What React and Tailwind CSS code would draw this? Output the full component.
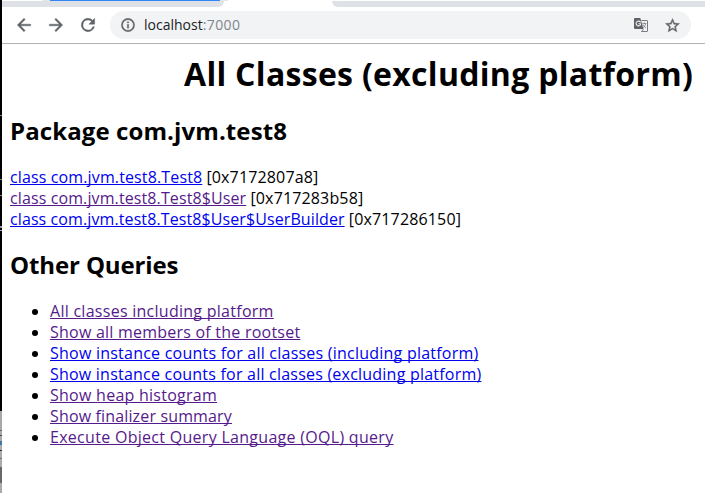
const classes = [
  { name: 'class com.jvm.test8.Test8', address: '[0x7172807a8]', style: 'text-[#0000ee] tracking-[0.13px]' },
  { name: 'class com.jvm.test8.Test8$User', address: '[0x717283b58]', style: 'text-[#551a8b] tracking-[0.11px]' },
  { name: 'class com.jvm.test8.Test8$User$UserBuilder', address: '[0x717286150]', style: 'text-[#0000ee] tracking-[0.1px]' },
];

const queries = [
  { label: 'All classes including platform', style: 'text-[#551a8b] tracking-[0.27px]' },
  { label: 'Show all members of the rootset', style: 'text-[#551a8b] tracking-[0.23px]' },
  { label: 'Show instance counts for all classes (including platform)', style: 'text-[#0000ee] tracking-[0.23px]' },
  { label: 'Show instance counts for all classes (excluding platform)', style: 'text-[#0000ee] tracking-[0.22px]' },
  { label: 'Show heap histogram', style: 'text-[#551a8b] tracking-[0.26px]' },
  { label: 'Show finalizer summary', style: 'text-[#551a8b] tracking-[0.15px]' },
  { label: 'Execute Object Query Language (OQL) query', style: 'text-[#551a8b] tracking-[0.29px]' },
];

const linkStyle = 'underline decoration-1 underline-offset-[1px] [text-decoration-skip-ink:none] ';

function TabStrip() {
  return (
    <div className="h-[7px] w-full shrink-0">
      <div className="flex h-px">
        <div className="ml-[40px] w-[8px] bg-[#e4e7ea]" />
        <div className="w-[170px] bg-[#3187f5]" />
        <div className="w-[8px] bg-[#e4e7ea]" />
      </div>
      <div className="flex h-[6px] justify-between">
        <div className="w-[222px] rounded-br-[6px] bg-[#dee1e6]" />
        <div className="w-[373px] rounded-bl-[6px] bg-[#dee1e6]" />
      </div>
    </div>
  );
}

function Toolbar() {
  return (
    <div className="flex h-[37px] w-full shrink-0 items-start border-b border-[#b1b1b1] pt-[4px]">
      <div className="flex h-7 items-center pl-[12px] text-[#5f6368]">
        <svg className="h-5 w-5" viewBox="0 0 24 24" fill="currentColor" stroke="currentColor" strokeWidth=".5"><path d="M20 11H7.83l5.59-5.59L12 4l-8 8 8 8 1.41-1.41L7.83 13H20z" /></svg>
        <svg className="ml-3 h-5 w-5" viewBox="0 0 24 24" fill="currentColor" stroke="currentColor" strokeWidth=".5"><path d="M12 4l-1.41 1.41L16.17 11H4v2h12.17l-5.58 5.59L12 20l8-8z" /></svg>
        <svg className="ml-3 h-5 w-5" viewBox="0 0 24 24" fill="currentColor" stroke="currentColor" strokeWidth=".5"><path d="M17.65 6.35A8 8 0 1 0 19.73 14h-2.08A6 6 0 1 1 12 6c1.66 0 3.14.69 4.22 1.78L13 11h7V4z" /></svg>
      </div>
      <div className="ml-[12px] flex h-7 w-[581px] items-center rounded-full bg-[#f1f3f4] pl-[10px] pr-[10px] text-[#5f6368]">
        <svg className="h-4 w-4" viewBox="0 0 24 24" fill="currentColor" stroke="currentColor" strokeWidth=".5"><path d="M11 17h2v-6h-2zm1-15a10 10 0 1 0 0 20 10 10 0 0 0 0-20m0 18a8 8 0 1 1 0-16 8 8 0 0 1 0 16M11 9h2V7h-2z" /></svg>
        <div className="ml-[8px] text-[14px] leading-7 text-[#202124]">localhost<span className="tracking-[0.4px] text-[#80868b]">:7000</span></div>
        <svg className="ml-auto h-4 w-4" viewBox="0 0 16 16" fill="none">
          <path d="M2 1h5.3l3.2 11H2a1 1 0 0 1-1-1V2a1 1 0 0 1 1-1z" fill="#5f6368" />
          <path d="M7.6 5.3A2.4 2.4 0 1 0 7.4 8V6.7H5.5" stroke="#f1f3f4" strokeWidth="1.1" />
          <path d="M8.5 3.5H14a.5.5 0 0 1 .5.5v10a.5.5 0 0 1-.5.5H8.5l2-2.5" stroke="#777b80" />
          <path d="M9.3 6.5h4M11.3 5.5v1M12.7 6.5c-.4 2-1.4 3.4-2.6 4.2M10 7.5c.6 1.4 1.7 2.6 3 3.5" stroke="#777b80" strokeWidth=".8" />
        </svg>
        <svg className="ml-[15px] h-[17px] w-[17px]" viewBox="0 0 24 24" fill="currentColor" stroke="currentColor" strokeWidth=".5"><path d="M22 9.24l-7.19-.62L12 2 9.19 8.63 2 9.24l5.46 4.73L5.82 21 12 17.27 18.18 21l-1.63-7.03zM12 15.4l-3.76 2.27 1-4.28-3.32-2.88 4.38-.38L12 6.1l1.71 4.04 4.38.38-3.32 2.88 1 4.28z" /></svg>
      </div>
    </div>
  );
}

function DesktopEdge() {
  return (
    <div className="flex h-full w-[2px] shrink-0 flex-col bg-black">
      <div className="mt-[115px] h-px bg-[#888]" />
      <div className="mt-[63px] h-px bg-[#888]" />
      <div className="mt-[15px] h-px bg-[#888]" />
      <div className="mt-[30px] h-[2px] bg-[#999]" />
      <div className="mt-[2px] h-px bg-[#aaa]" />
      <div className="mt-auto h-[19px] bg-[#a8a8a8]" />
      <div className="h-px bg-[#666]" />
      <div className="h-[4px] bg-[#aaa]" />
      <div className="h-px bg-[#444]" />
      <div className="h-[5px] bg-[#aaa]" />
      <div className="h-[4px] bg-[#377bac]" />
      <div className="h-[5px] bg-[#aaa]" />
      <div className="h-px bg-[#333]" />
      <div className="h-[7px] bg-[#aaa]" />
      <div className="h-px bg-[#777]" />
      <div className="h-[8px] bg-[#aaa]" />
      <div className="h-[16px] bg-[#686868]" />
      <div className="h-[10px] bg-[#aaa]" />
    </div>
  );
}

export default function App() {
  return (
    <div className="flex h-[493px] w-[705px] overflow-hidden bg-white font-['Open_Sans','Noto_Sans',sans-serif]">
      <DesktopEdge />
      <div className="flex w-[703px] flex-col">
        <TabStrip />
        <Toolbar />
        <main className="pl-[8px] text-[16px] leading-[21px] text-black">
          <h1 className="mt-[8px] w-max pl-[174px] text-[32px] leading-[43px] font-bold tracking-[0.3px] whitespace-nowrap">All Classes (excluding platform)</h1>
          <h2 className="mt-[20px] text-[24px] leading-[32px] font-bold tracking-[0.1px] whitespace-nowrap">Package com.jvm.test8</h2>
          <div className="mt-[20px]">
            {classes.map((item) => (
              <div key={item.name} className="h-[21px] whitespace-nowrap">
                <a className={linkStyle + item.style}>{item.name}</a> <span className="tracking-[0.15px]">{item.address}</span>
              </div>
            ))}
          </div>
          <h2 className="mt-[19px] text-[24px] leading-[32px] font-bold tracking-[-0.12px] whitespace-nowrap">Other Queries</h2>
          <ul className="mt-[20px]">
            {queries.map((item) => (
              <li key={item.label} className="flex h-[21px] items-center pl-[22px] whitespace-nowrap">
                <span className="mr-[12px] h-[6px] w-[6px] rounded-full bg-black" />
                <a className={linkStyle + item.style}>{item.label}</a>
              </li>
            ))}
          </ul>
        </main>
      </div>
    </div>
  );
}
